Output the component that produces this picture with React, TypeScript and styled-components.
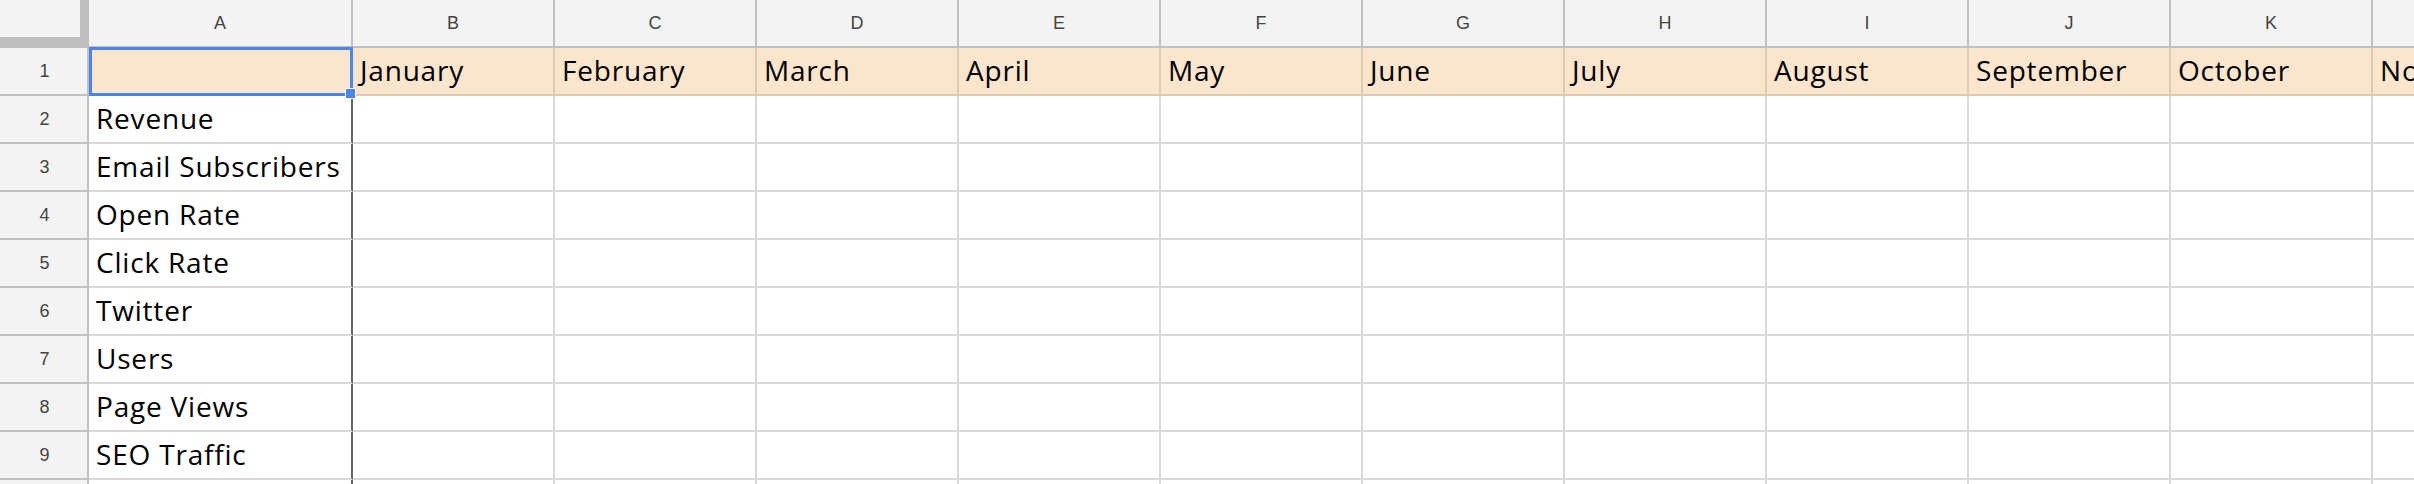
import React from "react";
import styled, { createGlobalStyle } from "styled-components";

const GlobalStyle = createGlobalStyle`
  html, body {
    margin: 0;
    padding: 0;
    background: #ffffff;
    overflow: hidden;
  }
`;

const ROW_HEADER_WIDTH = 89;
const COL_WIDTHS = [264, 202, 202, 202, 202, 202, 202, 202, 202, 202, 202, 202];
const LETTERS = ["A", "B", "C", "D", "E", "F", "G", "H", "I", "J", "K", "L"];
const MONTHS = [
  "January",
  "February",
  "March",
  "April",
  "May",
  "June",
  "July",
  "August",
  "September",
  "October",
  "November",
];
// last row is only a sliver at the bottom edge, so no label/number shows
const METRICS = [
  "Revenue",
  "Email Subscribers",
  "Open Rate",
  "Click Rate",
  "Twitter",
  "Users",
  "Page Views",
  "SEO Traffic",
  "",
];

const Sheet = styled.div`
  width: 2414px;
  height: 484px;
  overflow: hidden;
  display: flex;
  flex-direction: column;
  background: #ffffff;
`;

const Row = styled.div`
  display: flex;
  flex: none;
`;

const Corner = styled.div`
  flex: none;
  box-sizing: border-box;
  width: ${ROW_HEADER_WIDTH}px;
  height: 48px;
  background: #f3f3f3;
  border-right: 9px solid #bebebe;
  border-bottom: 11px solid #bebebe;
`;

const ColHeader = styled.div<{ $w: number }>`
  flex: none;
  box-sizing: border-box;
  width: ${(p) => p.$w}px;
  height: 48px;
  background: #f3f3f3;
  border-right: 2px solid #c0c0c0;
  border-bottom: 2px solid #c0c0c0;
  display: flex;
  align-items: center;
  justify-content: center;
  font-family: "Liberation Sans", Arial, sans-serif;
  font-size: 18px;
  color: #444444;
`;

const RowHeader = styled.div`
  flex: none;
  box-sizing: border-box;
  width: ${ROW_HEADER_WIDTH}px;
  height: 48px;
  background: #f3f3f3;
  border-right: 2px solid #c0c0c0;
  border-bottom: 2px solid #c0c0c0;
  display: flex;
  align-items: center;
  justify-content: center;
  padding-left: 2px;
  font-family: "Liberation Sans", Arial, sans-serif;
  font-size: 18px;
  color: #444444;
`;

const Cell = styled.div<{ $w: number; $band?: boolean; $edge?: boolean }>`
  position: relative;
  flex: none;
  box-sizing: border-box;
  width: ${(p) => p.$w}px;
  height: 48px;
  background: ${(p) => (p.$band ? "#fce5cd" : "#ffffff")};
  border-right: 2px solid
    ${(p) => (p.$edge ? "#666666" : p.$band ? "#e0cab4" : "#d9d9d9")};
  border-bottom: 2px solid ${(p) => (p.$band ? "#e0cab4" : "#d9d9d9")};
  display: flex;
  align-items: flex-end;
  padding: 0 0 5px 7px;
  font-family: "Open Sans", "Noto Sans", sans-serif;
  font-size: 28px;
  letter-spacing: 0.8px;
  line-height: 38px;
  color: #000000;
  white-space: nowrap;
  overflow: visible;
`;

const Selection = styled.div`
  position: absolute;
  left: 0;
  top: -1px;
  right: -2px;
  bottom: -2px;
  box-sizing: border-box;
  border: 3px solid #4a86e8;
  pointer-events: none;
  z-index: 2;
`;

const FillHandle = styled.div`
  position: absolute;
  right: -6px;
  bottom: -6px;
  width: 11px;
  height: 11px;
  box-sizing: border-box;
  background: #4a86e8;
  border: 1px solid #ffffff;
  z-index: 3;
`;

export default function App() {
  return (
    <>
      <GlobalStyle />
      <Sheet>
        <Row>
          <Corner />
          {LETTERS.map((l, i) => (
            <ColHeader key={l} $w={COL_WIDTHS[i]}>
              {l}
            </ColHeader>
          ))}
        </Row>
        <Row>
          <RowHeader>1</RowHeader>
          <Cell $w={COL_WIDTHS[0]} $band>
            <Selection>
              <FillHandle />
            </Selection>
          </Cell>
          {MONTHS.map((m, i) => (
            <Cell key={m} $w={COL_WIDTHS[i + 1]} $band>
              {m}
            </Cell>
          ))}
        </Row>
        {METRICS.map((label, r) => (
          <Row key={r}>
            <RowHeader>{label ? r + 2 : ""}</RowHeader>
            <Cell $w={COL_WIDTHS[0]} $edge>
              {label}
            </Cell>
            {MONTHS.map((m, i) => (
              <Cell key={m} $w={COL_WIDTHS[i + 1]} />
            ))}
          </Row>
        ))}
      </Sheet>
    </>
  );
}
